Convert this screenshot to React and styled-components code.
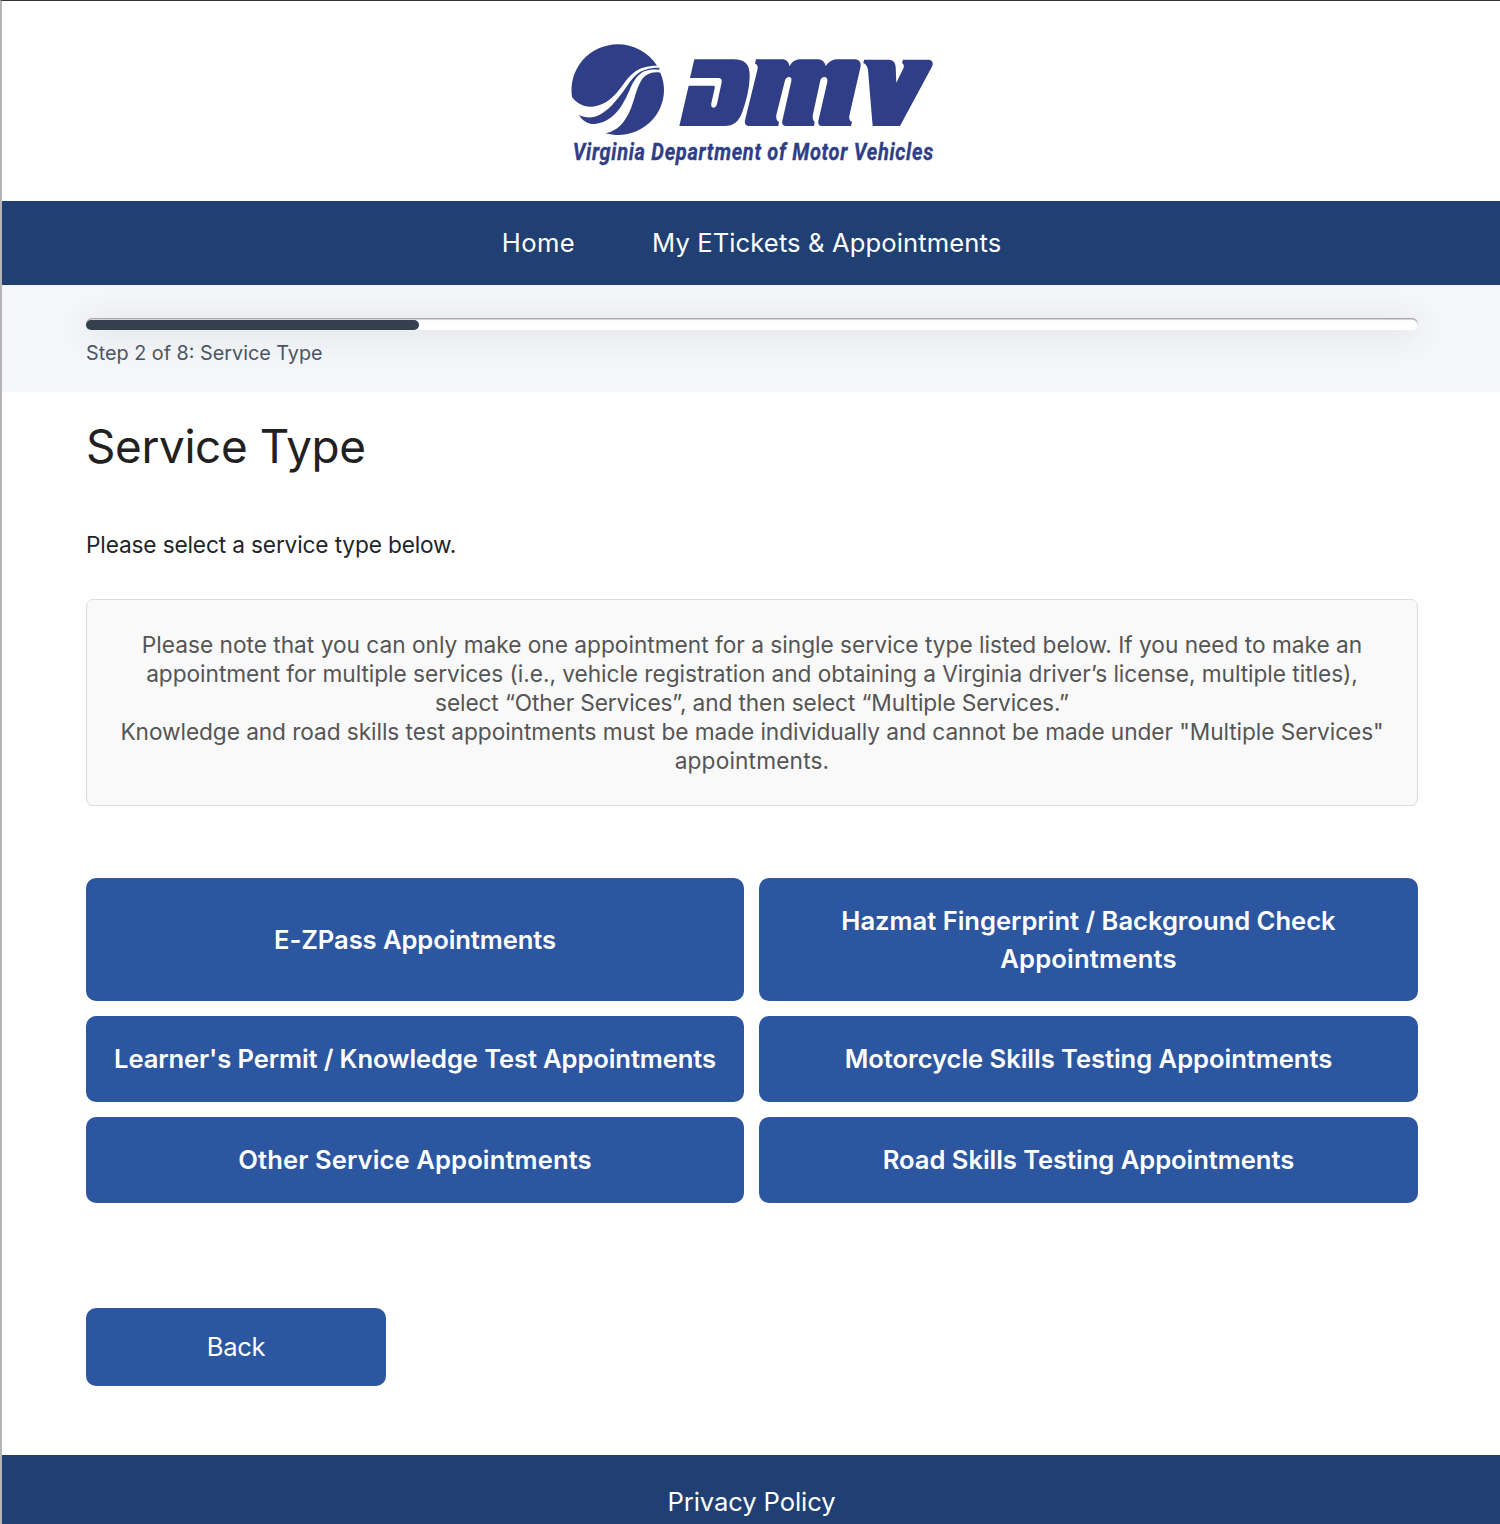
import React from 'react';
import styled, { createGlobalStyle } from 'styled-components';

const GlobalStyle = createGlobalStyle`
  *, *::before, *::after { box-sizing: border-box; }
  body {
    margin: 0;
    background: #fff;
    color: #212529;
    font-family: Inter, "Open Sans", sans-serif;
  }
`;

const Page = styled.div`
  display: flex;
  flex-direction: column;
  height: 1524px;
  overflow: hidden;
  border-top: 1px solid #353338;
  border-left: 2px solid #b5b5b9;
`;

const Label = styled.span`
  letter-spacing: ${(p) => p.$track || 0}px;
  white-space: nowrap;
`;

const Header = styled.header`
  display: flex;
  justify-content: center;
  height: 200px;
  padding-top: 34px;
  flex: none;

  svg {
    display: block;
    width: 380px;
    height: 140px;
    margin-left: -2px;
    overflow: visible;
  }
`;

const Nav = styled.nav`
  display: flex;
  justify-content: center;
  gap: 77px;
  flex: none;
  height: 84px;
  padding-left: 1px;
  background: #203f73;
`;

const NavLink = styled.a`
  color: #fff;
  font-size: 25.6px;
  line-height: 84px;
`;

const ProgressSection = styled.section`
  flex: none;
  height: 107px;
  padding: 33px 82px 0 84px;
  background: #f4f6fa;
`;

const Track = styled.div`
  height: 12px;
  padding-top: 2px;
  border-radius: 6px;
  background: #fff;
  box-shadow: inset 0 1.5px 1px rgba(0, 0, 0, 0.35), 0 4px 30px rgba(60, 60, 60, 0.16);
`;

const Fill = styled.div`
  width: 25%;
  height: 10px;
  border-radius: 5px;
  background: #35404e;
`;

const StepText = styled.p`
  margin: 8px 0 0;
  color: #4a5564;
  font-size: 19.8px;
  line-height: 30px;
`;

const Main = styled.main`
  flex: none;
  height: 1063px;
  padding: 26px 82px 0 84px;
`;

const Title = styled.h1`
  margin: 0;
  color: #212121;
  font-size: 45.8px;
  font-weight: 400;
  line-height: 58px;
`;

const Intro = styled.p`
  margin: 54px 0 0;
  font-size: 22.7px;
  line-height: 30px;
`;

const Note = styled.div`
  display: flex;
  flex-direction: column;
  align-items: center;
  height: 207px;
  margin-top: 39px;
  padding-top: 30px;
  border: 1px solid #dcdcdc;
  border-radius: 7px;
  background: #f9f9f9;
  color: #555;
  font-size: 22.7px;
  line-height: 29px;
`;

const ServiceGrid = styled.div`
  display: grid;
  grid-template-columns: 658px 1fr;
  grid-template-rows: 123px 86px 86px;
  gap: 15px;
  margin-top: 72px;
`;

const Button = styled.button`
  display: flex;
  flex-direction: column;
  align-items: center;
  justify-content: center;
  padding: 0;
  border: 0;
  border-radius: 10px;
  background: #2c56a0;
  color: #fff;
  font-family: inherit;
  font-size: 25.6px;
  font-weight: 600;
  line-height: 38px;
`;

const BackButton = styled(Button)`
  width: 300px;
  height: 78px;
  margin-top: 105px;
  font-weight: 400;
`;

const Footer = styled.footer`
  display: flex;
  justify-content: center;
  flex: none;
  height: 69px;
  padding-left: 1px;
  background: #203f73;
`;

const FooterLink = styled.a`
  color: #fff;
  font-size: 25.6px;
  line-height: 93px;
`;

const Logo = () => (
  <svg viewBox="0 0 1140 420" fill="#2f3e87" role="img" aria-label="DMV">
    <path d="M36 186A139 137 0 0 1 173 28A139 136 0 0 1 291 92C262 92 240 98 221 113C196 133 184 160 163 181C143 202 118 215 92 215C66 215 48 202 36 186Z" />
    <path d="M298 98C272 97 247 103 229 119C207 138 196 164 175 188C151 218 128 239 101 246C85 249 70 246 57 240C68 259 86 268 104 267C128 265 148 254 167 235C189 211 200 185 211 160C221 137 233 119 253 109C267 103 282 103 298 104Z" />
    <path d="M301 113C276 109 256 117 243 138C228 163 225 190 212 222C197 258 174 289 136 295A139 135 0 0 0 312 167A139 136 0 0 0 301 113Z" />
    <path d="M403 73H520C555 73 571 88 569 127C568 160 560 195 548 228C537 260 521 273 494 273H358L386 152H460Q466 152 464 160L454 205C450 222 468 222 471 207L485 142Q487 129 474 129H390Z" />
    <path d="M588 73H670Q686 76 688 94Q698 75 718 73H776Q794 76 797 94Q808 76 828 73H885Q904 75 902 94L868 242Q866 257 876 261L873 273H785Q773 272 775 258L802 140Q803 125 792 126Q782 128 780 140L758 242Q757 256 764 261L762 273H678Q664 272 667 257L694 138Q696 125 686 126Q676 128 674 140L649 240Q647 257 657 261L655 273H565Q552 271 555 256L592 105Q596 89 585 86Z" />
    <path d="M912 74H989Q1005 76 1007 95L1009 143L1031 98Q1033 88 1026 84L1029 74H1109Q1122 79 1117 93L1020 273H938L924 106Q922 89 910 84Z" />
    <text x="43.7" y="375" transform="scale(0.87 1)" textLength="1243" lengthAdjust="spacing" fontFamily="Roboto, sans-serif" fontSize="69" fontWeight="700" fontStyle="italic" stroke="#2f3e87" strokeWidth="1">Virginia Department of Motor Vehicles</text>
  </svg>
);

const NOTE_LINES = [
  { text: 'Please note that you can only make one appointment for a single service type listed below. If you need to make an', track: -0.01 },
  { text: 'appointment for multiple services (i.e., vehicle registration and obtaining a Virginia driver’s license, multiple titles),', track: -0.045 },
  { text: 'select “Other Services”, and then select “Multiple Services.”', track: -0.13 },
  { text: 'Knowledge and road skills test appointments must be made individually and cannot be made under "Multiple Services"', track: -0.08 },
  { text: 'appointments.', track: 0.15 },
];

const SERVICES = [
  [{ text: 'E-ZPass Appointments', track: -0.1 }],
  [
    { text: 'Hazmat Fingerprint / Background Check', track: -0.03 },
    { text: 'Appointments', track: 0.2 },
  ],
  [{ text: "Learner's Permit / Knowledge Test Appointments", track: -0.12 }],
  [{ text: 'Motorcycle Skills Testing Appointments', track: -0.05 }],
  [{ text: 'Other Service Appointments', track: 0.1 }],
  [{ text: 'Road Skills Testing Appointments', track: -0.06 }],
];

export default function App() {
  return (
    <>
      <GlobalStyle />
      <Page>
        <Header>
          <Logo />
        </Header>
        <Nav>
          <NavLink><Label $track={0.4}>Home</Label></NavLink>
          <NavLink><Label $track={0.1}>My ETickets &amp; Appointments</Label></NavLink>
        </Nav>
        <ProgressSection>
          <Track><Fill /></Track>
          <StepText><Label>Step 2 of 8: Service Type</Label></StepText>
        </ProgressSection>
        <Main>
          <Title><Label $track={-0.35}>Service Type</Label></Title>
          <Intro><Label $track={-0.16}>Please select a service type below.</Label></Intro>
          <Note>
            {NOTE_LINES.map((l) => (
              <Label key={l.text} $track={l.track}>{l.text}</Label>
            ))}
          </Note>
          <ServiceGrid>
            {SERVICES.map((lines) => (
              <Button key={lines[0].text}>
                {lines.map((l) => (
                  <Label key={l.text} $track={l.track}>{l.text}</Label>
                ))}
              </Button>
            ))}
          </ServiceGrid>
          <BackButton><Label $track={-0.3}>Back</Label></BackButton>
        </Main>
        <Footer>
          <FooterLink><Label $track={-0.1}>Privacy Policy</Label></FooterLink>
        </Footer>
      </Page>
    </>
  );
}
